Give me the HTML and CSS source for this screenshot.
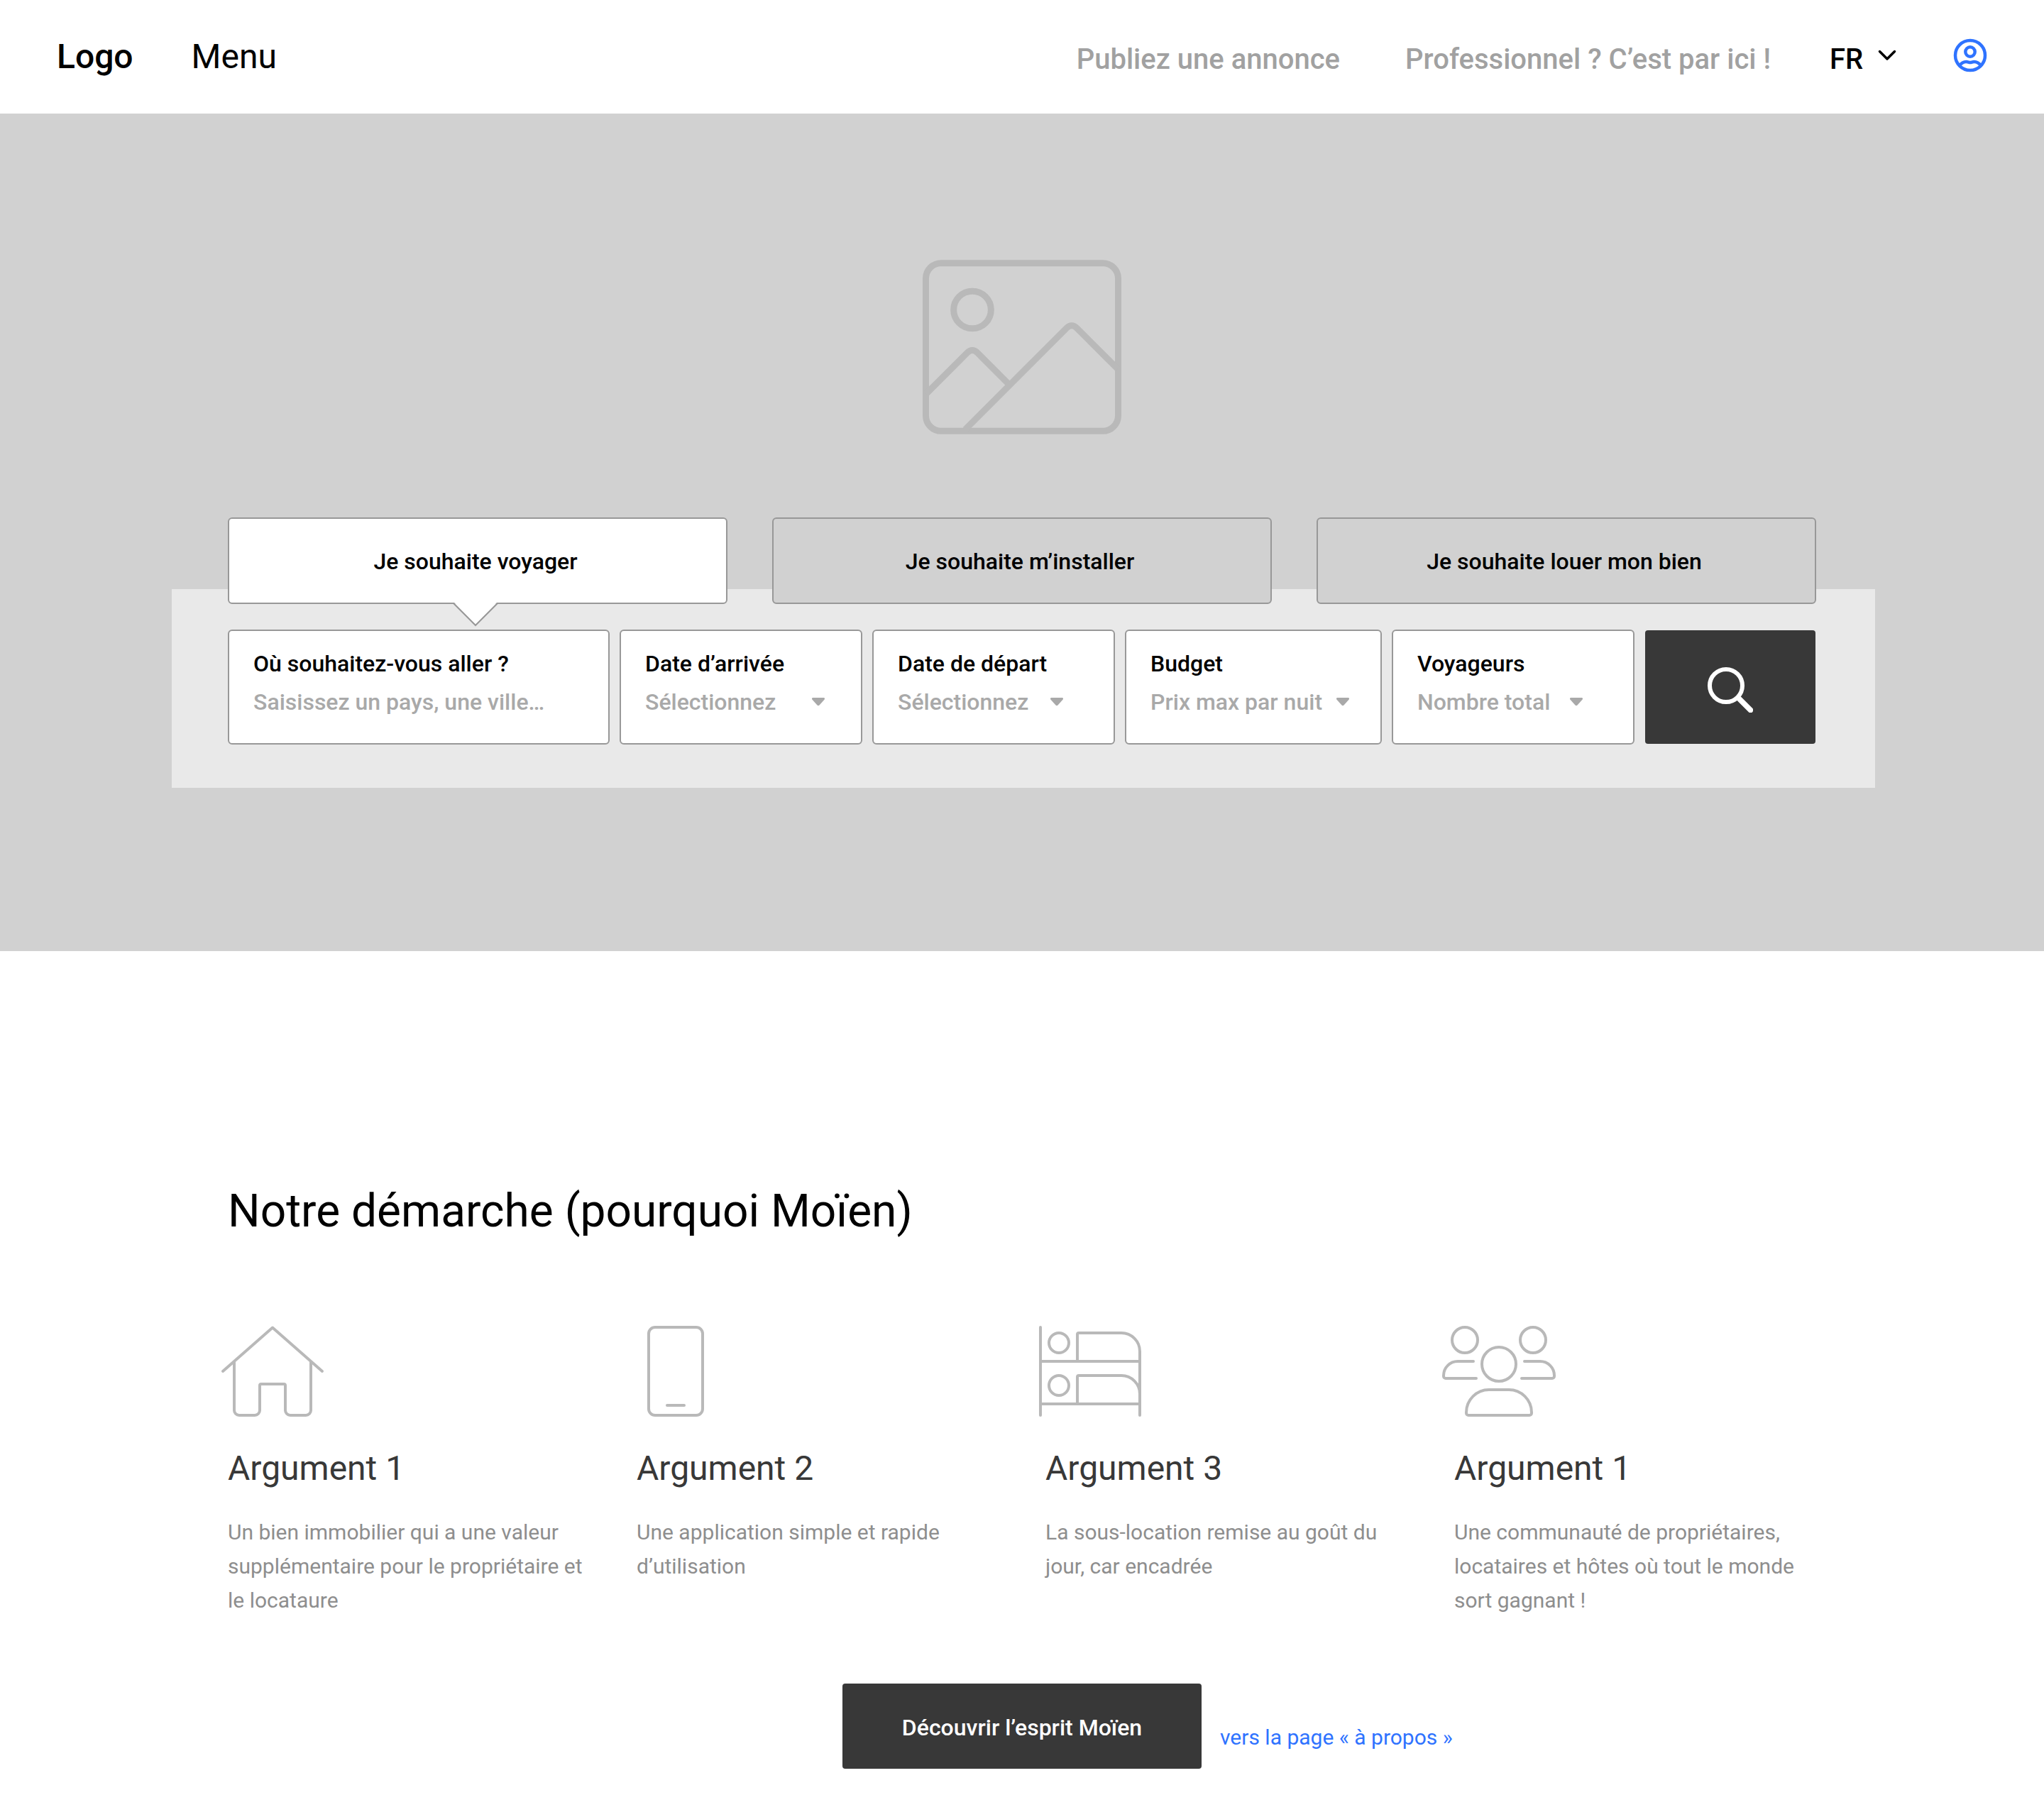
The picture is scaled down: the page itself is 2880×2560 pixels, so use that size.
FILE: index.html
```html
<!DOCTYPE html>
<html lang="fr">
<head>
<meta charset="utf-8">
<meta name="viewport" content="width=device-width, initial-scale=1">
<title>Moïen</title>
<link rel="stylesheet" href="styles.css">
</head>
<body>
<header class="topbar">
  <a class="logo" href="#">Logo</a>
  <a class="menu" href="#">Menu</a>
  <nav class="links">
    <a class="link-post" href="#">Publiez une annonce</a>
    <a class="link-pro" href="#">Professionnel ? C’est par ici !</a>
    <span class="lang">
      <select class="lang-select" aria-label="Langue"><option>FR</option></select>
      <svg class="lang-arrow" width="26" height="16" viewBox="0 0 26 16" fill="none" stroke="#000" stroke-width="3.500" stroke-linecap="round" stroke-linejoin="round"><path d="M2.500 2.500 13 13 23.500 2.500"/></svg>
    </span>
    <a class="account" href="#" aria-label="Mon compte">
      <svg width="48" height="48" viewBox="0 0 48 48" fill="none" stroke="#2f73ff" stroke-width="4.500"><circle cx="24" cy="24" r="21"/><circle cx="24" cy="19" r="6.700"/><path d="M8.500 39C12 34 15 33 18.500 33C21 33 22 34 24 34S27 33 29.500 33C33 33 36 34 39.500 39"/></svg>
    </a>
  </nav>
</header>

<main>
<section class="hero">
  <svg class="picture" width="280" height="246" viewBox="60 77.500 840 738" fill="none" stroke="#b9b9b9" stroke-width="27">
    <rect x="73.500" y="91.500" width="813" height="710" rx="65"/>
    <circle cx="270" cy="289" r="79"/>
    <path d="M76 643 248 471Q270 449 292 471L420 599M240 795 668 366.500Q690 344.500 712 366.500L884 538.500"/>
  </svg>
  <form class="search">
    <div class="tabs">
      <button type="button" class="tab tab-active">Je souhaite voyager
        <svg class="pointer" width="64" height="34" viewBox="0 0 64 34"><path d="M2 0H62L32 31Z" fill="#fff"/><path d="M1 1 32 32 63 1" fill="none" stroke="#989898" stroke-width="2"/></svg>
      </button>
      <button type="button" class="tab">Je souhaite m’installer</button>
      <button type="button" class="tab">Je souhaite louer mon bien</button>
    </div>
    <div class="fields">
      <div class="field">
        <label for="place">Où souhaitez-vous aller ?</label>
        <input id="place" type="text" placeholder="Saisissez un pays, une ville…">
      </div>
      <div class="field">
        <label for="arrival">Date d’arrivée</label>
        <div class="choice choice-wide"><select id="arrival"><option>Sélectionnez</option></select><svg class="caret" width="20" height="12" viewBox="0 0 20 12"><path d="M2.500 0H17.500Q20 .5 18.500 2.800L11.500 10.500Q10 12 8.500 10.500L1.500 2.800Q0 .5 2.500 0Z" fill="#a9a9a9"/></svg></div>
      </div>
      <div class="field">
        <label for="departure">Date de départ</label>
        <div class="choice"><select id="departure"><option>Sélectionnez</option></select><svg class="caret" width="20" height="12" viewBox="0 0 20 12"><path d="M2.500 0H17.500Q20 .5 18.500 2.800L11.500 10.500Q10 12 8.500 10.500L1.500 2.800Q0 .5 2.500 0Z" fill="#a9a9a9"/></svg></div>
      </div>
      <div class="field">
        <label for="budget">Budget</label>
        <div class="choice choice-budget"><select id="budget"><option>Prix max par nuit</option></select><svg class="caret" width="20" height="12" viewBox="0 0 20 12"><path d="M2.500 0H17.500Q20 .5 18.500 2.800L11.500 10.500Q10 12 8.500 10.500L1.500 2.800Q0 .5 2.500 0Z" fill="#a9a9a9"/></svg></div>
      </div>
      <div class="field">
        <label for="guests">Voyageurs</label>
        <div class="choice"><select id="guests"><option>Nombre total</option></select><svg class="caret" width="20" height="12" viewBox="0 0 20 12"><path d="M2.500 0H17.500Q20 .5 18.500 2.800L11.500 10.500Q10 12 8.500 10.500L1.500 2.800Q0 .5 2.500 0Z" fill="#a9a9a9"/></svg></div>
      </div>
      <button type="submit" class="submit" aria-label="Rechercher">
        <svg width="64" height="64" viewBox="0 0 64 64" fill="none" stroke="#fff"><circle cx="26" cy="26" r="23" stroke-width="6"/><path d="M44 44 60.500 60.500" stroke-width="7.500" stroke-linecap="round"/></svg>
      </button>
    </div>
  </form>
</section>

<section class="about">
  <h1>Notre démarche (pourquoi Moïen)</h1>
  <div class="arguments">
    <article class="argument">
      <svg class="icon" width="160" height="128" viewBox="0 0 160 128"><path d="M9 64 79 2.500 149 64M25 51V119a7 7 0 0 0 7 7H54a7 7 0 0 0 7-7V84a2 2 0 0 1 2-2H95a2 2 0 0 1 2 2V119a7 7 0 0 0 7 7H126a7 7 0 0 0 7-7V51"/></svg>
      <h2>Argument 1</h2>
      <p>Un bien immobilier qui a une valeur supplémentaire pour le propriétaire et le locataure</p>
    </article>
    <article class="argument">
      <svg class="icon" width="160" height="128" viewBox="0 0 160 128"><rect x="33" y="2" width="76" height="124" rx="9"/><path d="M59 112H83"/></svg>
      <h2>Argument 2</h2>
      <p>Une application simple et rapide d’utilisation</p>
    </article>
    <article class="argument">
      <svg class="icon" width="160" height="128" viewBox="0 0 160 128"><path d="M9 2V126M149 36V126M9 50H149M9 110H149M61 50V12a2 2 0 0 1 2-2H123a26 26 0 0 1 26 26M61 110V72a2 2 0 0 1 2-2H123a26 26 0 0 1 26 26"/><circle cx="35" cy="24" r="14"/><circle cx="35" cy="84" r="14"/></svg>
      <h2>Argument 3</h2>
      <p>La sous-location remise au goût du jour, car encadrée</p>
    </article>
    <article class="argument">
      <svg class="icon" width="160" height="128" viewBox="0 0 160 128"><circle cx="31" cy="20" r="18"/><circle cx="127" cy="20" r="18"/><circle cx="79" cy="54" r="24"/><path d="M43 50H21A20 20 0 0 0 1 70v1a3 3 0 0 0 3 3H47M115 50H137A20 20 0 0 1 157 70v1a3 3 0 0 1-3 3H111M65 90H93A32 32 0 0 1 125 122v1a3 3 0 0 1-3 3H36a3 3 0 0 1-3-3v-1A32 32 0 0 1 65 90Z"/></svg>
      <h2>Argument 1</h2>
      <p>Une communauté de propriétaires, locataires et hôtes où tout le monde sort gagnant !</p>
    </article>
  </div>
  <div class="discover">
    <button type="button" class="discover-button">Découvrir l’esprit Moïen</button>
    <a class="discover-link" href="#">vers la page « à propos »</a>
  </div>
</section>
</main>
</body>
</html>
```
FILE: styles.css
```css
* {
  box-sizing: border-box;
}

body {
  margin: 0;
  background: #fff;
  color: #000;
  font-family: Roboto, "Open Sans", sans-serif;
  font-size: 32px;
}

a {
  color: inherit;
  text-decoration: none;
}

svg {
  display: block;
}

button,
input,
select {
  margin: 0;
  padding: 0;
  border: 0;
  background: none;
  color: inherit;
  font: inherit;
}

select {
  appearance: none;
}

h1,
h2,
p {
  margin: 0;
  font-weight: 400;
}

/* Top bar */
.topbar {
  display: flex;
  align-items: center;
  height: 160px;
  padding: 0 80px;
  font-size: 48px;
  line-height: 64px;
}

.logo {
  font-weight: 500;
}

.menu {
  margin-left: 82px;
}

.links {
  display: flex;
  align-items: center;
  margin-left: auto;
  padding-bottom: 4px;
  color: #a1a1a1;
  font-size: 40px;
  font-weight: 500;
}

.link-post,
.link-pro,
.lang-select {
  padding-top: 12px;
}

.link-pro {
  margin-left: 92px;
}

.lang {
  display: flex;
  align-items: center;
  gap: 20px;
  margin-left: 83px;
  color: #000;
}

.lang-arrow {
  pointer-events: none;
}

.account {
  margin-left: 80px;
}

/* Hero and search */
.hero {
  padding: 206px 238px 230px 242px;
  background: #d1d1d1;
}

.picture {
  margin: 0 auto 218px;
  padding-right: 4px;
  box-sizing: content-box;
}

.search {
  padding: 0 83px 61px 79px;
  background: #e9e9e9;
}

.tabs {
  display: grid;
  grid-template-columns: repeat(3, 1fr);
  gap: 63px;
  margin-bottom: 36px;
}

.tab {
  position: relative;
  height: 122px;
  margin-top: -101px;
  padding: 2px 6px 0 0;
  border: 2px solid #989898;
  border-radius: 6px;
  background: #d1d1d1;
  font-weight: 500;
}

.tab-active {
  background: #fff;
}

.pointer {
  position: absolute;
  top: 118px;
  left: 315px;
}

.fields {
  display: grid;
  grid-template-columns: 538fr 342fr 342fr 362fr 342fr 242fr;
  gap: 14px;
}

.field {
  display: flex;
  flex-direction: column;
  gap: 14px;
  min-width: 0;
  height: 162px;
  padding: 26px 0 0 34px;
  border: 2px solid #989898;
  border-radius: 6px;
  background: #fff;
  font-weight: 500;
  line-height: 40px;
}

.field input {
  height: 40px;
}

.field input::placeholder,
.choice select {
  color: #a9a9a9;
  opacity: 1;
}

.choice {
  display: flex;
  align-items: center;
  justify-content: space-between;
  width: 234px;
}

.choice-wide {
  width: 254px;
}

.choice-budget {
  width: 281px;
}

.caret {
  pointer-events: none;
}

.submit {
  display: grid;
  place-items: center;
  margin: 1px;
  padding-top: 8px;
  border-radius: 4px;
  background: #383838;
}

/* Arguments */
.about {
  padding: 327px 321px 66px;
}

h1 {
  font-size: 64px;
  line-height: 80px;
}

.arguments {
  display: grid;
  grid-template-columns: repeat(4, 1fr);
  gap: 66px;
  margin-top: 121px;
}

.icon {
  margin-left: -16px;
  overflow: visible;
  fill: none;
  stroke: #b9b9b9;
  stroke-width: 4px;
  stroke-linecap: round;
  stroke-linejoin: round;
}

h2 {
  margin-top: 43px;
  color: #383838;
  font-size: 48px;
  line-height: 60px;
}

.argument p {
  margin-top: 36px;
  color: #8e8e8e;
  font-size: 30px;
  line-height: 48px;
}

.discover {
  display: grid;
  grid-template-columns: 1fr 506px 1fr;
  margin-top: 93px;
}

.discover-button {
  grid-column: 2;
  height: 120px;
  padding-top: 4px;
  border-radius: 4px;
  background: #383838;
  color: #fff;
  font-weight: 500;
}

.discover-link {
  padding: 52px 0 0 26px;
  color: #2f73ff;
  font-size: 30px;
  line-height: 48px;
}
```
